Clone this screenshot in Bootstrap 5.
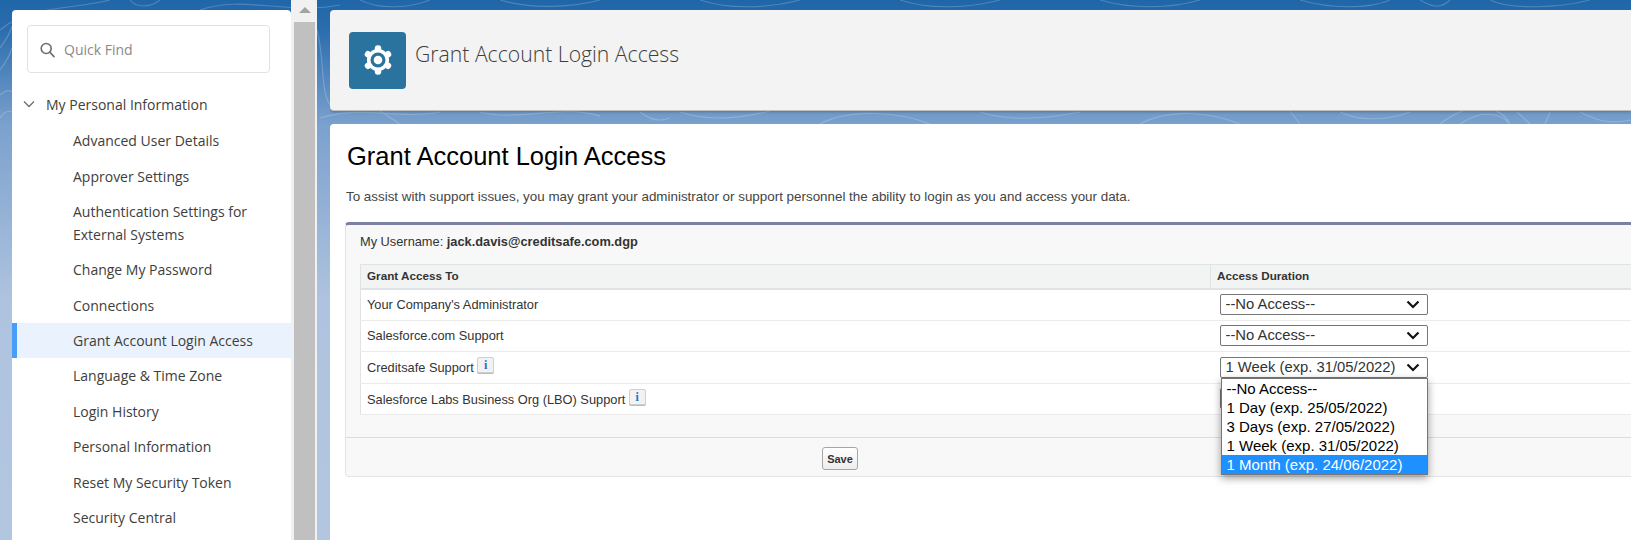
<!DOCTYPE html>
<html lang="en">
<head>
<meta charset="utf-8">
<title>Grant Account Login Access</title>
<link rel="stylesheet" href="https://cdn.jsdelivr.net/npm/bootstrap@5.3.0/dist/css/bootstrap.min.css">
<style>
html,body{height:540px;overflow:hidden}
body{background-color:#7ea3cf;background-image:url("data:image/svg+xml,%3Csvg xmlns='http://www.w3.org/2000/svg' width='1631' height='130' fill='none' stroke='%23ffffff' stroke-opacity='.2' stroke-width='1.2'%3E%3Cpath d='M0 30C30 5 70 10 110 0M0 48C6 40 10 34 12 26M0 70C6 62 10 56 12 48M0 95C6 90 10 90 12 92M0 118C4 112 8 110 12 112M130 0C136 8 150 8 160 0M200 10C240 -5 290 15 340 5M360 0C380 10 410 8 430 0M500 0C530 9 570 8 600 0M700 0C730 10 770 8 800 0M900 0C930 10 970 8 1000 0M1100 0C1130 9 1170 9 1200 0M1300 0C1330 9 1370 9 1390 0M317 30C325 60 320 90 330 105M296 0C300 5 310 8 317 4M320 118C360 105 400 120 440 112M380 111L400 124M480 112C520 122 560 104 600 116M640 112C650 120 660 122 670 118M680 112C710 122 740 118 770 111M820 124C850 108 900 112 930 124M980 112C1010 122 1050 118 1080 112M1140 124C1170 108 1210 112 1240 124M1290 111L1300 124M1340 112C1360 122 1390 120 1410 112M1440 124C1470 100 1500 105 1510 124M1460 124C1480 110 1500 112 1510 124M1580 112C1600 122 1610 124 1631 120M1517 112L1530 124M1550 112L1545 124M1490 0C1510 10 1560 8 1590 0M1420 0C1430 6 1440 10 1450 0'/%3E%3C/svg%3E"),linear-gradient(#1f66a8 0,#2b6dae 30px,#7ba1cd 125px,#aec3df 300px,#b2c6e0 540px);background-repeat:no-repeat;font-family:"Liberation Sans",Arial,sans-serif;color:#222}
.shell{height:540px;padding:10px 0 0 12px}
.navpane{width:279px;flex:none;background:#fff;border-radius:4px 4px 0 0;font-family:"Open Sans",sans-serif;font-size:14px;color:#3e3e3c;overflow:hidden}
.findbox{margin:15px 21px 16px 15px;height:48px;border:1px solid #e2e2e2;border-radius:4px;padding-left:12px;color:#8a8a88;gap:9px;padding-top:1px}
.navhead{height:30px;padding-left:11px;gap:11px;margin-bottom:4px}
.navlink{display:block;padding:6.2px 20px 6.2px 61px;line-height:23px;color:#3e3e3c;text-decoration:none}
.navlink.current{background:#eaf3fd;border-left:5px solid #4a9cf9;padding-left:56px}
.scrolltrack{width:26px;flex:none;margin-top:-10px;background:#f1f1f1;padding:0 2px 0 3px}
.scrollup{height:22px;padding-top:7px}
.scrollup i{display:block;width:0;margin:0 auto;border:6px solid transparent;border-top:0;border-bottom-color:#a3a3a3}
.scrollthumb{background:#c0c0c0}
.mainpane{width:1301px;flex:none;margin-left:13px;overflow:hidden}
.pagehead{height:101px;background:#f3f3f3;border-radius:4px 0 0 4px;border-bottom:1px solid #c0c0c0;box-shadow:0 1px 3px rgba(0,0,0,.25);padding-left:19px;gap:9px;font-family:"Open Sans",sans-serif;font-size:21.2px;font-weight:300;color:#3e3e3c}
.pagehead span{margin-bottom:12px}
.pagetile{width:57px;height:57px;background:#2a739e;border-radius:4px}
.pagebody{margin-top:13px;height:420px;background:#fff;border-radius:4px 0 0 0;padding:17px 0 0 16px}
.pagetitle{font-size:25.5px;font-weight:400;line-height:30px;color:#000;margin:0 0 17px 1px}
.pageintro{font-size:13.4px;line-height:18px;color:#444;margin:0 0 16px}
.grantblock{width:1400px;height:255px;background:#f8f8f8;border:1px solid #e4e4e4;border-top:3px solid #7c7fa6;border-radius:4px;margin-left:-1px}
.userline{font-size:12.8px;line-height:16px;padding:9px 0 0 14px;height:39px;color:#333}
.granttable{width:1280px;margin:0 0 0 14px;background:#fff;font-size:12.8px;color:#333;border:1px solid #e0e3e5;border-collapse:collapse;table-layout:fixed}
.granttable th,.granttable td{padding:0 6px;font-weight:400;border-bottom:1px solid #ebebeb;vertical-align:middle}
.granttable th{height:24px;background:#f2f3f3;font-weight:700;font-size:11.7px;color:#333;border-bottom:2px solid #e0e3e5;border-top:0}
.granttable th+th{border-left:1px solid #e0e3e5}
.granttable td{height:31.5px}
.durationcol{position:relative}
.durationpick{width:208px;height:21px;margin-left:3px;padding:0 30px 0 5px;font-family:"Liberation Sans",Arial,sans-serif;font-size:14.8px;line-height:19px;color:#333;border:1px solid #767676;border-radius:2px;background-color:#fff;background-image:url("data:image/svg+xml,%3Csvg xmlns='http://www.w3.org/2000/svg' viewBox='0 0 14 9' fill='none' stroke='%23111' stroke-width='2.200'%3E%3Cpath d='M1.500 1.500L7 7l5.500-5.500'/%3E%3C/svg%3E");background-position:right 7px center;background-size:14px 9px;box-shadow:none}
.infotag{display:inline-block;width:17px;height:16px;margin-left:0;vertical-align:3px;border:1px solid #d0d0d0;border-radius:2px;background:#f2f2f2;box-shadow:0 1px 0 #bbb;font:700 12px/14px "Liberation Serif",serif;text-align:center;color:#1a73d0}
.savebar{height:40px;margin-top:22px;border-top:1px solid #dcdcdc;padding:8px 0 0 476px}
.savebtn{width:36px;height:23px;padding:0;font-size:11px;font-weight:700;line-height:20px;color:#333;background:linear-gradient(#fff,#ededed);border:1px solid #a5a5a5;border-radius:3px}
.optionmenu{display:block;position:absolute;left:10px;top:-6px;width:207px;min-width:0;padding:0;margin:0;background:#fff;border:1px solid #767676;border-radius:0;box-shadow:0 3px 8px rgba(0,0,0,.4);font-size:15px;z-index:5}
.optionmenu .dropdown-item{padding:0 5px;line-height:19px;height:19px;color:#000}
.optionmenu .dropdown-item.active{background:#1e90ff;color:#fff}
</style>
</head>
<body>
<div class="shell d-flex">
  <nav class="navpane">
    <div class="findbox d-flex align-items-center">
      <svg width="15" height="16" viewBox="0 0 15 16" fill="none" stroke="#706e6b" stroke-width="1.6"><circle cx="6.2" cy="6.5" r="5"/><path d="M10 10.4l4 4.2" stroke-linecap="round"/></svg>
      <span>Quick Find</span>
    </div>
    <div class="navhead d-flex align-items-center">
      <svg width="12" height="8" viewBox="0 0 12 8" fill="none" stroke="#706e6b" stroke-width="1.3"><path d="M1 1.5l5 5 5-5"/></svg>
      <span>My Personal Information</span>
    </div>
    <a class="navlink" href="#">Advanced User Details</a>
    <a class="navlink" href="#">Approver Settings</a>
    <a class="navlink" href="#">Authentication Settings for External Systems</a>
    <a class="navlink" href="#">Change My Password</a>
    <a class="navlink" href="#">Connections</a>
    <a class="navlink current" href="#">Grant Account Login Access</a>
    <a class="navlink" href="#">Language &amp; Time Zone</a>
    <a class="navlink" href="#">Login History</a>
    <a class="navlink" href="#">Personal Information</a>
    <a class="navlink" href="#">Reset My Security Token</a>
    <a class="navlink" href="#">Security Central</a>
  </nav>
  <div class="scrolltrack d-flex flex-column">
    <div class="scrollup"><i></i></div>
    <div class="scrollthumb flex-grow-1"></div>
  </div>
  <main class="mainpane">
    <header class="pagehead d-flex align-items-center">
      <div class="pagetile d-flex align-items-center justify-content-center">
        <svg width="32" height="32" viewBox="0 0 32 32">
          <g stroke="#fff" stroke-width="6.5" stroke-linecap="round"><path d="M16 4.500V27.500M6 10.250L26 21.750M6 21.750L26 10.250"/></g>
          <circle cx="16" cy="16" r="11" fill="#fff"/>
          <circle cx="16" cy="16" r="7.500" fill="#2a739e"/>
          <circle cx="16" cy="16" r="4.300" fill="#fff"/>
        </svg>
      </div>
      <span>Grant Account Login Access</span>
    </header>
    <section class="pagebody">
      <h1 class="pagetitle">Grant Account Login Access</h1>
      <p class="pageintro">To assist with support issues, you may grant your administrator or support personnel the ability to login as you and access your data.</p>
      <div class="grantblock">
        <div class="userline">My Username: <b>jack.davis@creditsafe.com.dgp</b></div>
        <table class="granttable">
          <colgroup><col style="width:850px"><col></colgroup>
          <thead><tr><th>Grant Access To</th><th>Access Duration</th></tr></thead>
          <tbody>
            <tr><td>Your Company's Administrator</td><td><select class="form-select durationpick"><option>--No Access--</option></select></td></tr>
            <tr><td>Salesforce.com Support</td><td><select class="form-select durationpick"><option>--No Access--</option></select></td></tr>
            <tr><td>Creditsafe Support <span class="infotag">i</span></td><td><select class="form-select durationpick"><option>1 Week (exp. 31/05/2022)</option></select></td></tr>
            <tr><td>Salesforce Labs Business Org (LBO) Support <span class="infotag">i</span></td><td class="durationcol"><select class="form-select durationpick"><option>--No Access--</option></select>
              <div class="dropdown-menu optionmenu">
                <a class="dropdown-item" href="#">--No Access--</a>
                <a class="dropdown-item" href="#">1 Day (exp. 25/05/2022)</a>
                <a class="dropdown-item" href="#">3 Days (exp. 27/05/2022)</a>
                <a class="dropdown-item" href="#">1 Week (exp. 31/05/2022)</a>
                <a class="dropdown-item active" href="#">1 Month (exp. 24/06/2022)</a>
              </div></td></tr>
          </tbody>
        </table>
        <div class="savebar"><button type="button" class="btn savebtn">Save</button></div>
      </div>
    </section>
  </main>
</div>
</body>
</html>
